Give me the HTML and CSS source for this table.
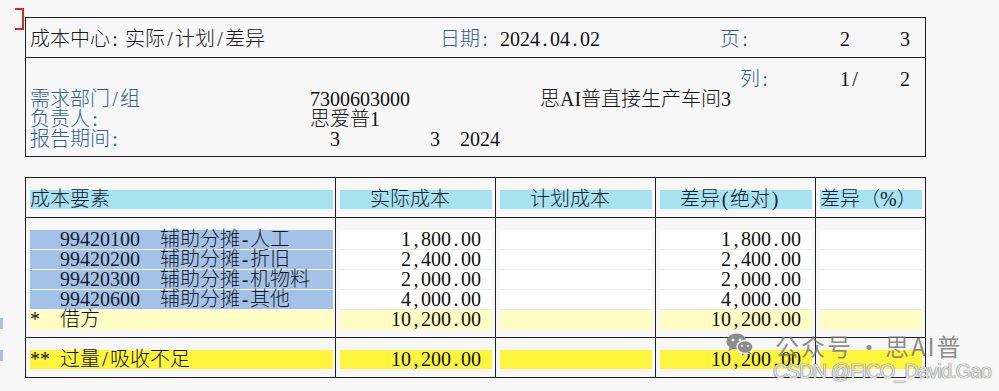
FILE: index.html
```html
<!DOCTYPE html>
<html lang="zh-CN">
<head>
<meta charset="utf-8">
<title>成本中心: 实际/计划/差异</title>
<link rel="stylesheet" href="styles.css">
</head>
<body>
<div class="marker"></div>
<div class="edge-mark edge-mark-a"></div>
<div class="edge-mark edge-mark-b"></div>

<main class="page">
  <section class="head-box">
    <div class="line title-row">
      <span class="title">成本中心<span class="pu">:</span> 实际<span class="pu">/</span>计划<span class="pu">/</span>差异</span>
      <span class="lbl date-label">日期<span class="pu">:</span></span>
      <span class="date">2024<span class="pu">.</span>04<span class="pu">.</span>02</span>
      <span class="lbl page-label">页<span class="pu">:</span></span>
      <span class="page-cur">2</span>
      <span class="page-tot">3</span>
    </div>
    <div class="info">
      <div class="line">
        <span class="lbl col-label">列<span class="pu">:</span></span>
        <span class="page-cur">1<span class="pu">/</span></span>
        <span class="page-tot">2</span>
      </div>
      <div class="line">
        <span class="lbl key">需求部门<span class="pu">/</span>组</span>
        <span class="val">7300603000</span>
        <span class="name">思AI普直接生产车间3</span>
      </div>
      <div class="line">
        <span class="lbl key">负责人<span class="pu">:</span></span>
        <span class="val">思爱普1</span>
      </div>
      <div class="line">
        <span class="lbl key-wide">报告期间<span class="pu">:</span></span>
        <span class="per-from">3</span>
        <span class="per-to">3</span>
        <span class="per-year">2024</span>
      </div>
    </div>
  </section>

  <section class="report">
    <div class="cell head first"><div class="band cyan">成本要素</div></div>
    <div class="cell head"><div class="band cyan ind3">实际成本</div></div>
    <div class="cell head"><div class="band cyan ind3">计划成本</div></div>
    <div class="cell head"><div class="band cyan ind2">差异<span class="pu">(</span>绝对<span class="pu">)</span></div></div>
    <div class="cell head"><div class="band cyan">差异（%）</div></div>

    <div class="cell body first">
      <div class="row elem blue"><span class="ecode">99420100</span><span class="ename">辅助分摊<span class="pu">-</span>人工</span></div>
      <div class="row elem blue"><span class="ecode">99420200</span><span class="ename">辅助分摊<span class="pu">-</span>折旧</span></div>
      <div class="row elem blue"><span class="ecode">99420300</span><span class="ename">辅助分摊<span class="pu">-</span>机物料</span></div>
      <div class="row elem blue"><span class="ecode">99420600</span><span class="ename">辅助分摊<span class="pu">-</span>其他</span></div>
      <div class="row elem lyellow"><span class="emark">*</span><span class="etext">借方</span></div>
    </div>
    <div class="cell body amount">
      <div class="row white">1<span class="pu">,</span>800<span class="pu">.</span>00</div>
      <div class="row white">2<span class="pu">,</span>400<span class="pu">.</span>00</div>
      <div class="row white">2<span class="pu">,</span>000<span class="pu">.</span>00</div>
      <div class="row white">4<span class="pu">,</span>000<span class="pu">.</span>00</div>
      <div class="row lyellow">10<span class="pu">,</span>200<span class="pu">.</span>00</div>
    </div>
    <div class="cell body amount">
      <div class="row white"></div>
      <div class="row white"></div>
      <div class="row white"></div>
      <div class="row white"></div>
      <div class="row lyellow"></div>
    </div>
    <div class="cell body amount">
      <div class="row white">1<span class="pu">,</span>800<span class="pu">.</span>00</div>
      <div class="row white">2<span class="pu">,</span>400<span class="pu">.</span>00</div>
      <div class="row white">2<span class="pu">,</span>000<span class="pu">.</span>00</div>
      <div class="row white">4<span class="pu">,</span>000<span class="pu">.</span>00</div>
      <div class="row lyellow">10<span class="pu">,</span>200<span class="pu">.</span>00</div>
    </div>
    <div class="cell body amount">
      <div class="row white"></div>
      <div class="row white"></div>
      <div class="row white"></div>
      <div class="row white"></div>
      <div class="row lyellow"></div>
    </div>

    <div class="cell foot first"><div class="row elem yellow"><span class="emark">**</span><span class="etext">过量<span class="pu">/</span>吸收不足</span></div></div>
    <div class="cell foot amount"><div class="row yellow">10<span class="pu">,</span>200<span class="pu">.</span>00</div></div>
    <div class="cell foot amount"><div class="row yellow"></div></div>
    <div class="cell foot amount"><div class="row yellow">10<span class="pu">,</span>200<span class="pu">.</span>00</div></div>
    <div class="cell foot amount"><div class="row yellow"></div></div>
  </section>
</main>

<div class="wm">
  <svg class="wm-icon" width="28" height="22" viewBox="0 0 28 22" aria-hidden="true">
    <ellipse cx="10.5" cy="8.5" rx="10" ry="8" fill="#8c8c8c"/>
    <path d="M4 13.5 L2.5 18 L8.5 15.5 Z" fill="#8c8c8c"/>
    <circle cx="7" cy="7" r="1.4" fill="#f4f4f4"/>
    <circle cx="14" cy="7" r="1.4" fill="#f4f4f4"/>
    <ellipse cx="19" cy="14" rx="8" ry="6.5" fill="#8c8c8c" stroke="#f4f4f4" stroke-width="1.5"/>
    <path d="M23.5 18.5 L26 21.5 L20.5 20 Z" fill="#8c8c8c"/>
    <circle cx="16" cy="13" r="1.1" fill="#f4f4f4"/>
    <circle cx="22" cy="13" r="1.1" fill="#f4f4f4"/>
  </svg>
  <span class="wm-text">公众号</span><span class="wm-dot">·</span><span class="wm-text">思AI普</span>
</div>
<div class="wm-csdn">CSDN @FICO_David.Gao</div>
</body>
</html>
```

FILE: styles.css
```css
* { box-sizing: border-box; }

html, body { margin: 0; padding: 0; }

body {
  position: relative;
  width: 999px;
  height: 391px;
  overflow: hidden;
  background: #f7f7f7;
  color: #111;
  font-family: "Liberation Serif", "Noto Sans CJK SC", serif;
  font-weight: 300;
  font-size: 20px;
  line-height: 20px;
}

/* selection marker and edge marks in the margin */
.marker {
  position: absolute;
  left: 15px;
  top: 8px;
  width: 9px;
  height: 22px;
  border: 2px solid #cc2f2f;
  border-left: none;
}
.edge-mark {
  position: absolute;
  left: 0;
  width: 3px;
  height: 11px;
  background: #a9c0df;
}
.edge-mark-a { top: 318px; }
.edge-mark-b { top: 350px; }

.page { padding: 17px 0 0 25px; }

/* ---------- header box ---------- */
.head-box {
  width: 901px;
  border: 1px solid #202020;
}
.title-row {
  padding: 11px 4px 8px;
  border-bottom: 1px solid #202020;
  box-sizing: content-box;
}
.info { padding: 11px 4px 7px; }

.line {
  display: grid;
  grid-template-columns: repeat(89, 10px);
  height: 20px;
  white-space: nowrap;
}

.lbl { color: #2f5f97; }

.title { grid-column: 1 / 42; color: #1a1a1a; }
.date-label { grid-column: 42 / 48; }
.date { grid-column: 48 / 70; }
.page-label { grid-column: 70 / 82; }
.col-label { grid-column: 72 / 82; }
.page-cur { grid-column: 82 / 88; }
.page-tot { grid-column: 88 / 90; }

.key { grid-column: 1 / 29; }
.key-wide { grid-column: 1 / 31; }
.val { grid-column: 29 / 52; }
.name { grid-column: 52 / 90; }
.per-from { grid-column: 31 / 41; }
.per-to { grid-column: 41 / 44; }
.per-year { grid-column: 44 / 48; }

.pu {
  display: inline-block;
  width: 10px;
  text-align: center;
}

/* ---------- report table ---------- */
.report {
  margin-top: 20px;
  width: 901px;
  display: grid;
  grid-template-columns: 310px 160px 160px 160px 110px;
  border-top: 1px solid #202020;
  border-left: 1px solid #202020;
}

.cell {
  border-right: 1px solid #202020;
  border-bottom: 1px solid #202020;
  padding: 12px 3px 8px 4px;
}
.cell.first { padding-right: 2px; }
.cell.body { padding-bottom: 7px; }

.band {
  height: 19px;
  line-height: 19px;
  white-space: nowrap;
  color: #16232e;
}
.cyan { background: #a7e2f1; }
.ind3 { padding-left: 30px; }
.ind2 { padding-left: 20px; }

.row {
  height: 20px;
  line-height: 19px;
  border-bottom: 1px solid transparent;
  white-space: nowrap;
  color: #111;
}
.row.blue { background: #a4c2e8; border-bottom-color: #ffffff; color: #141c29; }
.row.white { background: #ffffff; border-bottom-color: #ececec; }
.row.lyellow { background: #fffcc4; }
.row.yellow { background: #fff53c; height: 19px; border-bottom: none; }

.elem {
  display: grid;
  grid-template-columns: 30px 100px 1fr;
}
.ecode { grid-column: 2; }
.ename { grid-column: 3; }
.emark { grid-column: 1; }
.etext { grid-column: 2 / 4; }

.amount .row {
  text-align: right;
  padding-right: 11px;
}

/* ---------- watermark overlay ---------- */
.wm {
  position: absolute;
  left: 726px;
  top: 333px;
  display: flex;
  align-items: center;
  height: 26px;
  color: rgba(112, 112, 112, 0.78);
  font-family: "Noto Sans CJK SC", sans-serif;
  font-weight: 400;
  font-size: 24px;
  line-height: 26px;
}
.wm-icon { margin-right: 21px; margin-top: -4px; }
.wm-text { letter-spacing: 2px; }
.wm-dot {
  display: inline-block;
  width: 32px;
  text-align: center;
}
.wm-csdn {
  position: absolute;
  left: 773px;
  top: 360px;
  font-family: "Liberation Sans", sans-serif;
  font-weight: 400;
  font-size: 20px;
  line-height: 22px;
  letter-spacing: -0.9px;
  color: rgba(236, 236, 236, 0.92);
  text-shadow: 0 0 1px #707070, 0 0 1px #707070;
}
```
